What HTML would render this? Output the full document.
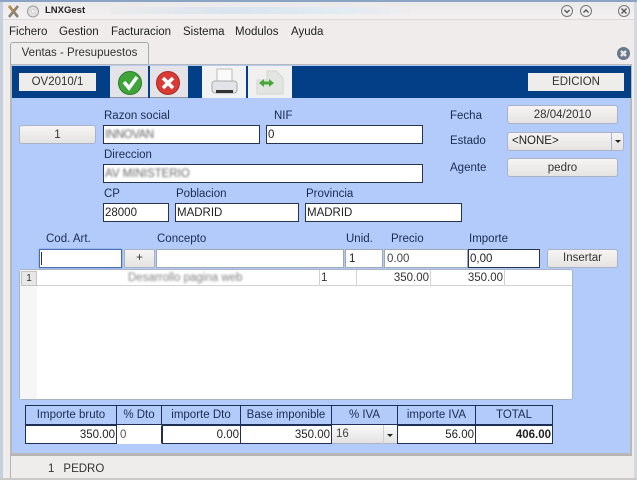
<!DOCTYPE html>
<html><head><meta charset="utf-8">
<style>
html,body{margin:0;padding:0}
body{width:637px;height:480px;overflow:hidden;position:relative;background:#f0ecec;font-family:"Liberation Sans",sans-serif;font-size:11.5px;color:#222}
.a{position:absolute;box-sizing:border-box;white-space:nowrap}
.l{position:absolute;white-space:nowrap;color:#1c2c50;font-size:11.5px;line-height:13px}
.i{position:absolute;box-sizing:border-box;background:#fff;border:1px solid #26344f;line-height:18px;padding-left:1px;white-space:nowrap;color:#222;font-size:11.5px}
.b{position:absolute;box-sizing:border-box;background:linear-gradient(#f6f4f4,#e6e3e3);border:1px solid #a9b3c4;border-radius:3px;text-align:center;color:#333;white-space:nowrap;font-size:11.5px}
.m{position:absolute;top:25px;font-size:11.5px;line-height:14px;color:#222}
.blur{position:absolute;filter:blur(1.1px);color:#666;white-space:nowrap;font-size:11.5px;line-height:12px}
.h{position:absolute;top:405px;height:20px;box-sizing:border-box;border:1px solid #1d2f55;background:#b2cbfb;text-align:center;line-height:19px;color:#1c2c50;font-size:11.5px}
.v{position:absolute;top:425px;height:19px;box-sizing:border-box;border:1px solid #1d2f55;background:#fff;text-align:right;line-height:18px;font-size:11.5px;color:#222;padding-right:1px}
.tv{position:absolute;top:270px;line-height:16px;font-size:11.5px;color:#333}
.ln{position:absolute;background:#d2d2d2}
</style></head><body>
<div class="a" style="left:0;top:0;width:637px;height:2px;background:#8ba3c4"></div>
<div class="a" style="left:0;top:2px;width:637px;height:17px;background:linear-gradient(#ebe9e9,#f3f1f1)"></div>
<div class="a" style="left:110px;top:7px;width:300px;height:7px;background:linear-gradient(90deg,#ecebeb,#d9e4ef 40%,#e4ecf3 80%,#eeeded);"></div>
<div class="a" style="left:0;top:19px;width:637px;height:1px;background:#dcd9d9"></div>
<div class="a" style="left:0;top:2px;width:3px;height:478px;background:#c5cfdd"></div>
<div class="a" style="left:634px;top:2px;width:3px;height:478px;background:#d4d8df"></div>
<svg class="a" style="left:7px;top:3px" width="34" height="16" viewBox="0 0 34 16">
<path d="M2 3L11 14M11 3L2 14" stroke="#8a8172" stroke-width="2.600" fill="none"/>
<path d="M2 3L6 8" stroke="#c98a3a" stroke-width="2"/>
<circle cx="26" cy="8.500" r="5.500" fill="#e2e2e2" stroke="#9a9a9a"/><circle cx="26" cy="8.500" r="2" fill="#f5f5f5" stroke="#bbb" stroke-width=".5"/></svg>
<div class="a" style="left:45px;top:3px;font-size:9.500px;font-weight:bold;line-height:15px;color:#222">LNXGest</div>
<svg class="a" style="left:558px;top:3px" width="76" height="16" viewBox="0 0 76 16" fill="none" stroke="#777">
<circle cx="9" cy="8" r="5.500" fill="#eee"/><path d="M6.500 7L9 9.500L11.500 7" stroke="#555" stroke-width="1.400"/>
<circle cx="28" cy="8" r="5.500" fill="#eee"/><path d="M25.500 9.500L28 7L30.500 9.500" stroke="#555" stroke-width="1.400"/>
<circle cx="66" cy="8" r="5.500" fill="#eee"/><path d="M63.500 5.500L68.500 10.500M68.500 5.500L63.500 10.500" stroke="#555" stroke-width="1.400"/></svg>
<div class="m" style="left:9px">Fichero</div>
<div class="m" style="left:59px">Gestion</div>
<div class="m" style="left:111px">Facturacion</div>
<div class="m" style="left:183px">Sistema</div>
<div class="m" style="left:235px">Modulos</div>
<div class="m" style="left:291px">Ayuda</div>
<div class="a" style="left:10px;top:42px;width:139px;height:23px;background:#efecec;border:1px solid #a8a8a8;border-bottom:0;border-radius:3px 3px 0 0;text-align:center;line-height:21px;color:#333;font-size:11.5px">Ventas - Presupuestos</div>
<svg class="a" style="left:616px;top:46px" width="15" height="15" viewBox="0 0 15 15"><circle cx="7.500" cy="7.500" r="6.500" fill="#68778e"/><path d="M5 5L10 10M10 5L5 10" stroke="#e8e8e8" stroke-width="2.400"/></svg>
<div class="a" style="left:10px;top:64px;width:622px;height:391px;background:#b2cbfb;border:1px solid #b8b8b8;border-width:1px 2px 2px 2px"></div>
<div class="a" style="left:12px;top:66px;width:619px;height:32px;background:#033f87"></div>
<div class="a" style="left:19px;top:73px;width:77px;height:18px;background:#efecec;text-align:center;line-height:18px;color:#333;font-size:11.5px">OV2010/1</div>
<div class="a" style="left:528px;top:73px;width:96px;height:18px;background:#efecec;text-align:center;line-height:18px;color:#333;font-size:11.5px">EDICION</div>
<div class="a" style="left:110px;top:66px;width:38px;height:32px;background:#e4e4e8;border-bottom:1px solid #8a92a2"></div>
<div class="a" style="left:150px;top:66px;width:38px;height:32px;background:#e4e4e8;border-bottom:1px solid #8a92a2"></div>
<div class="a" style="left:202px;top:66px;width:44px;height:32px;background:#f3f3f3"></div>
<div class="a" style="left:248px;top:66px;width:44px;height:32px;background:#f0f0f0"></div>
<svg class="a" style="left:110px;top:66px" width="182" height="32" viewBox="0 0 182 32">
<circle cx="20" cy="17" r="11.500" fill="#3fa53a" stroke="#2d7b2b"/>
<path d="M14 16L19 22L27 11" stroke="#fff" stroke-width="3.600" fill="none"/>
<circle cx="58" cy="17" r="11.500" fill="#d93a35" stroke="#a92a28"/>
<path d="M53 12L63 22M63 12L53 22" stroke="#fff" stroke-width="3.600"/>
<path d="M107 3h15v13h-15z" fill="#fafafa" stroke="#bbb"/>
<rect x="102" y="15" width="25" height="12" rx="3" fill="#e2e4e7" stroke="#aaa"/>
<rect x="106" y="24" width="17" height="3" fill="#333"/>
<path d="M157 5h9l7 7v16h-26v-14h10z" fill="#e2e5e2" stroke="#d2d4d2"/>
<path d="M149 17l5-4v8zM164 17l-5-4v8z" fill="#4aa83a"/><rect x="153" y="15.500" width="7" height="3" fill="#4aa83a"/>
</svg>
<div class="b" style="left:19px;top:125px;width:77px;height:19px;line-height:19px">1</div>
<div class="l" style="left:104px;top:110px">Razon social</div>
<div class="i" style="left:103px;top:125px;width:157px;height:19px"></div>
<div class="blur" style="left:105px;top:129px;letter-spacing:-.4px">INNOVAN</div>
<div class="l" style="left:274px;top:110px">NIF</div>
<div class="i" style="left:266px;top:125px;width:157px;height:19px">0</div>
<div class="l" style="left:104px;top:149px">Direccion</div>
<div class="i" style="left:103px;top:164px;width:320px;height:19px"></div>
<div class="blur" style="left:105px;top:168px">AV MINISTERIO</div>
<div class="l" style="left:104px;top:188px">CP</div>
<div class="l" style="left:176px;top:188px">Poblacion</div>
<div class="l" style="left:306px;top:188px">Provincia</div>
<div class="i" style="left:103px;top:203px;width:66px;height:19px">28000</div>
<div class="i" style="left:175px;top:203px;width:124px;height:19px">MADRID</div>
<div class="i" style="left:305px;top:203px;width:157px;height:19px">MADRID</div>
<div class="l" style="left:450px;top:110px">Fecha</div>
<div class="b" style="left:507px;top:105px;width:111px;height:19px;line-height:18px">28/04/2010</div>
<div class="l" style="left:450px;top:135px">Estado</div>
<div class="b" style="left:507px;top:132px;width:117px;height:19px;line-height:16px;text-align:left;padding-left:4px;color:#222">&lt;NONE&gt;</div>
<div class="a" style="left:611px;top:133px;width:1px;height:17px;background:#a9b3c4"></div>
<div class="a" style="left:615px;top:140px;border:3px solid transparent;border-top:3px solid #222"></div>
<div class="l" style="left:450px;top:162px">Agente</div>
<div class="b" style="left:507px;top:158px;width:111px;height:19px;line-height:18px">pedro</div>
<div class="l" style="left:46px;top:233px">Cod. Art.</div>
<div class="l" style="left:157px;top:233px">Concepto</div>
<div class="l" style="left:346px;top:233px">Unid.</div>
<div class="l" style="left:391px;top:233px">Precio</div>
<div class="l" style="left:469px;top:233px">Importe</div>
<div class="i" style="left:39px;top:249px;width:83px;height:19px;border-color:#4a6fb0;box-shadow:0 0 1px #4a6fb0"></div>
<div class="a" style="left:41px;top:252px;width:1px;height:13px;background:#333"></div>
<div class="b" style="left:124px;top:249px;width:31px;height:19px;line-height:17px;border-radius:2px">+</div>
<div class="i" style="left:156px;top:249px;width:188px;height:19px;border-color:#a0a8b4"></div>
<div class="i" style="left:345px;top:249px;width:38px;height:19px;border-color:#a0a8b4;padding-left:3px">1</div>
<div class="i" style="left:384px;top:249px;width:84px;height:19px;border-color:#a0a8b4;padding-left:2px;color:#444">0.00</div>
<div class="i" style="left:468px;top:249px;width:72px;height:19px">0,00</div>
<div class="b" style="left:547px;top:249px;width:71px;height:19px;line-height:17px">Insertar</div>
<div class="a" style="left:19px;top:269px;width:554px;height:131px;background:#fff;border:1px solid #a9b3c4;border-radius:3px"></div>
<div class="a" style="left:20px;top:270px;width:17px;height:129px;background:#f7f6f6"></div>
<div class="a" style="left:21px;top:271px;width:16px;height:15px;background:#e8e6e6;border:1px solid #c4c4c4;text-align:center;line-height:13px;font-size:10px;color:#333">1</div>
<div class="ln" style="left:37px;top:285px;width:535px;height:1px"></div>
<div class="ln" style="left:319px;top:270px;width:1px;height:16px"></div>
<div class="ln" style="left:356px;top:270px;width:1px;height:16px"></div>
<div class="ln" style="left:430px;top:270px;width:1px;height:16px"></div>
<div class="ln" style="left:504px;top:270px;width:1px;height:16px"></div>
<div class="blur" style="left:128px;top:272px;color:#808080">Desarrollo pagina web</div>
<div class="tv" style="left:321px">1</div>
<div class="tv" style="left:356px;width:73px;text-align:right">350.00</div>
<div class="tv" style="left:430px;width:73px;text-align:right">350.00</div>
<div class="h" style="left:25px;width:92px">Importe bruto</div>
<div class="h" style="left:116px;width:46px">% Dto</div>
<div class="h" style="left:161px;width:80px">importe Dto</div>
<div class="h" style="left:240px;width:92px">Base imponible</div>
<div class="h" style="left:331px;width:67px">% IVA</div>
<div class="h" style="left:397px;width:79px">importe IVA</div>
<div class="h" style="left:475px;width:78px">TOTAL</div>
<div class="v" style="left:25px;width:92px">350.00</div>
<div class="v" style="left:117px;width:45px;text-align:left;border-color:#fff;border-right-color:#1d2f55;padding-left:2px;color:#555">0</div>
<div class="v" style="left:162px;width:79px">0.00</div>
<div class="v" style="left:240px;width:92px">350.00</div>
<div class="a" style="left:332px;top:425px;width:66px;height:19px;background:linear-gradient(#fafafa,#e4e2e2);line-height:18px;padding-left:4px;color:#444;border-bottom:1px solid #a9b3c4">16</div>
<div class="a" style="left:383px;top:425px;width:1px;height:19px;background:#d0d0d0"></div>
<div class="a" style="left:387px;top:434px;border:3px solid transparent;border-top:3px solid #222"></div>
<div class="v" style="left:397px;width:79px">56.00</div>
<div class="v" style="left:475px;width:78px;font-weight:bold">406.00</div>
<div class="a" style="left:10px;top:455px;width:622px;height:23px;background:#efecec;border-top:1px solid #b4b4b4;border-left:1px solid #b4b4b4"></div>
<div class="a" style="left:48px;top:462px;font-size:11.5px;line-height:14px;color:#333">1<span style="margin-left:9px">PEDRO</span></div>
<div class="a" style="left:0;top:478px;width:637px;height:2px;background:#c9c9c9"></div>
</body></html>
